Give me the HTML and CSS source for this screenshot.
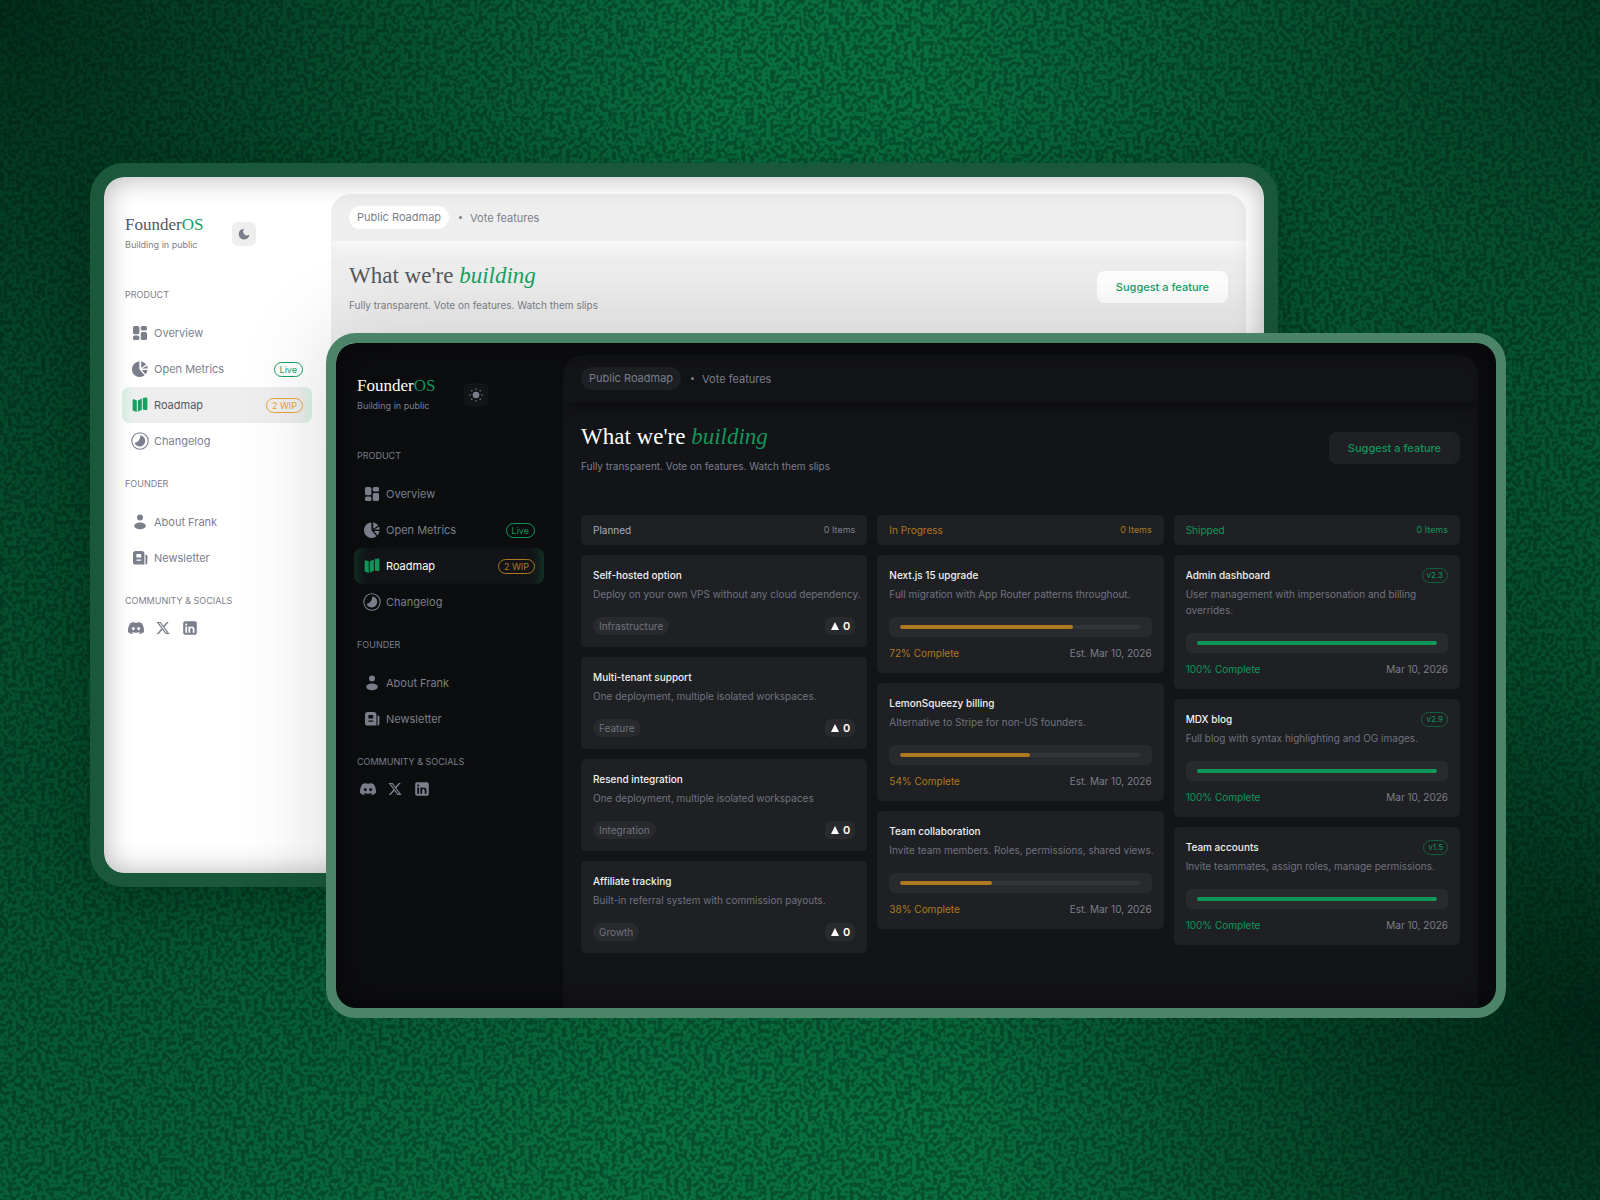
FILE: index.html
```
<!DOCTYPE html>
<html lang="en">
<head>
    <meta charset="UTF-8">
    <meta name="viewport" content="width=device-width, initial-scale=1.0">
    <title>FounderOS | Public Roadmap</title>
    <link rel="stylesheet" href="styles.css">
</head>
<body>
    <svg class="sprite" width="0" height="0" aria-hidden="true">
        <symbol id="i-overview" viewBox="0 0 16 16">
            <rect x="1" y="1" width="6.4" height="8.2" rx="1.6"/><rect x="8.8" y="1" width="6.2" height="4.6" rx="1.6"/>
            <rect x="1" y="10.4" width="6.4" height="4.6" rx="1.6"/><rect x="8.8" y="7" width="6.2" height="8" rx="1.6"/>
        </symbol>
        <symbol id="i-metrics" viewBox="0 0 16 16">
            <path d="M7.4.4A7.8 7.8 0 1 0 12.6 14.3L7.6 8.6Q7.4 8.3 7.4 8Z"/>
            <path d="M9.2.8Q9.2.4 9.7.5A7.4 7.4 0 0 1 13.8 3.1Q14.1 3.5 13.7 3.8L9.9 6.4Q9.2 6.8 9.2 6Z"/>
            <path d="M14.7 4.9Q15.1 4.7 15.3 5.2A7.6 7.6 0 0 1 15.6 7.4L10.8 7.4Q10.4 7.3 10.8 7Z"/>
            <path d="M10 8.9L15.5 8.9A7.8 7.8 0 0 1 13.8 13.1Q13.4 13.4 13.1 13Z"/>
        </symbol>
        <symbol id="i-roadmap" viewBox="0 0 16 16">
            <path d="M.6 3.4Q.6 1.9 2 2.3L4.8 3.4V14.9L1.7 13.9Q.6 13.5.6 12.4Z"/>
            <path d="M5.8 3.4L9.8 1.4V12.8L5.8 14.8Z"/>
            <path d="M10.8 1.1L13.9.6Q15.4.4 15.4 1.9V11.8Q15.4 12.8 14.5 13.2L10.8 12.6Z"/>
        </symbol>
        <symbol id="i-changelog" viewBox="0 0 18 18">
            <circle cx="9" cy="9" r="8.2" fill="none" stroke="currentColor" stroke-width="1.1"/>
            <path d="M9.2 4.1Q9.2 3.5 9.9 3.6A5.5 5.5 0 1 1 3.8 11.5Q3.5 10.9 4.2 10.7Q9.2 9.4 9.2 4.1Z"/>
        </symbol>
        <symbol id="i-about" viewBox="0 0 16 16">
            <circle cx="8" cy="3.5" r="3"/><ellipse cx="8" cy="11.9" rx="5.8" ry="3.3"/>
        </symbol>
        <symbol id="i-news" viewBox="0 0 16 16">
            <path fill-rule="evenodd" d="M3.6 1H9.6Q12.4 1 12.4 3.8V14.6H3.6Q1 14.6 1 12V3.8Q1 1 3.6 1ZM4.4 4V7.6H9.2V4ZM4.4 9.4V10.8H9.2V9.4Z"/>
            <path d="M13.5 4.4Q15.4 4.6 15.4 6.2V12.4Q15.4 14.6 13.5 14.6Z"/>
        </symbol>
        <symbol id="i-discord" viewBox="0 0 24 24">
            <path d="M20.317 4.37a19.79 19.79 0 0 0-4.885-1.515.074.074 0 0 0-.079.037c-.21.375-.444.864-.608 1.25a18.27 18.27 0 0 0-5.487 0 12.64 12.64 0 0 0-.617-1.25.077.077 0 0 0-.079-.037A19.736 19.736 0 0 0 3.677 4.37a.07.07 0 0 0-.032.027C.533 9.046-.32 13.58.099 18.057a.082.082 0 0 0 .031.057 19.9 19.9 0 0 0 5.993 3.03.078.078 0 0 0 .084-.028 14.09 14.09 0 0 0 1.226-1.994.076.076 0 0 0-.041-.106 13.107 13.107 0 0 1-1.872-.892.077.077 0 0 1-.008-.128 10.2 10.2 0 0 0 .372-.292.074.074 0 0 1 .077-.01c3.928 1.793 8.18 1.793 12.062 0a.074.074 0 0 1 .078.01c.12.098.246.198.373.292a.077.077 0 0 1-.006.127 12.299 12.299 0 0 1-1.873.892.077.077 0 0 0-.041.107c.36.698.772 1.362 1.225 1.993a.076.076 0 0 0 .084.028 19.839 19.839 0 0 0 6.002-3.03.077.077 0 0 0 .032-.054c.5-5.177-.838-9.674-3.549-13.66a.061.061 0 0 0-.031-.03zM8.02 15.33c-1.183 0-2.157-1.085-2.157-2.419 0-1.333.956-2.419 2.157-2.419 1.21 0 2.176 1.096 2.157 2.42 0 1.333-.956 2.418-2.157 2.418zm7.975 0c-1.183 0-2.157-1.085-2.157-2.419 0-1.333.955-2.419 2.157-2.419 1.21 0 2.176 1.096 2.157 2.42 0 1.333-.946 2.418-2.157 2.418z"/>
        </symbol>
        <symbol id="i-x" viewBox="0 0 24 24">
            <path fill-rule="evenodd" d="M17.7 3h3l-6.6 7.6L21.900 21h-6.100l-4.800-6.200L5.600 21h-3l7.100-8.100L2.200 3h6.200l4.300 5.700zM16.700 19.300h1.700L7.500 4.600H5.700z"/>
        </symbol>
        <symbol id="i-linkedin" viewBox="0 0 16 16">
            <path fill-rule="evenodd" d="M3 1.200H13Q14.800 1.200 14.800 3V13Q14.800 14.800 13 14.800H3Q1.200 14.800 1.200 13V3Q1.200 1.200 3 1.200ZM3.300 6.500V12.700H5.100V6.500ZM4.200 3.400A1.100 1.100 0 1 0 4.200 5.600A1.100 1.100 0 1 0 4.200 3.400ZM6.400 6.500V12.700H8.200V9.400Q8.200 8 9.400 8T10.700 9.400V12.700H12.500V8.900Q12.500 6.400 10.200 6.400Q8.800 6.400 8.200 7.300V6.500Z"/>
        </symbol>
        <symbol id="i-moon" viewBox="0 0 12 12">
            <path d="M5.800.7A5.400 5.400 0 1 0 11.400 7Q11.400 6.500 10.900 6.800A3.900 3.900 0 0 1 5.600 1.500Q6.100.8 5.800.7Z"/>
        </symbol>
        <symbol id="i-sun" viewBox="0 0 14 14">
            <circle cx="7" cy="7" r="3.300"/>
            <circle cx="7" cy="1" r=".8"/><circle cx="7" cy="13" r=".8"/><circle cx="1" cy="7" r=".8"/><circle cx="13" cy="7" r=".8"/>
            <circle cx="2.800" cy="2.800" r=".8"/><circle cx="11.200" cy="2.800" r=".8"/><circle cx="2.800" cy="11.200" r=".8"/><circle cx="11.200" cy="11.200" r=".8"/>
        </symbol>
    </svg>

    <main class="stage">
        <!-- grain over the green backdrop -->
        <svg class="grain" aria-hidden="true">
            <filter id="grain" x="0" y="0" width="100%" height="100%" color-interpolation-filters="sRGB">
                <feTurbulence type="fractalNoise" baseFrequency="0.24" numOctaves="1" seed="4"/>
                <feColorMatrix values="0 0 0 0 0  0 0 0 0 .08  0 0 0 0 .06  -9 0 0 0 4.900"/>
            </filter>
            <rect width="100%" height="100%" filter="url(#grain)"/>
        </svg>

        <section class="window light">
            <aside class="sidebar">
                <div class="brand">
                    <div>
                        <div class="logo">Founder<span>OS</span></div>
                        <p class="tagline">Building in public</p>
                    </div>
                    <button class="theme" aria-label="Dark theme"><svg width="12" height="12"><use href="#i-moon"/></svg></button>
                </div>
                <h2 class="label">PRODUCT</h2>
                <nav class="nav">
                    <a href="#"><svg><use href="#i-overview"/></svg>Overview</a>
                    <a href="#"><svg><use href="#i-metrics"/></svg>Open Metrics<span class="badge green">Live</span></a>
                    <a href="#" class="active"><svg><use href="#i-roadmap"/></svg>Roadmap<span class="badge orange">2 WIP</span></a>
                    <a href="#"><svg class="ring"><use href="#i-changelog"/></svg>Changelog</a>
                </nav>
                <h2 class="label">FOUNDER</h2>
                <nav class="nav">
                    <a href="#"><svg><use href="#i-about"/></svg>About Frank</a>
                    <a href="#"><svg><use href="#i-news"/></svg>Newsletter</a>
                </nav>
                <h2 class="label">COMMUNITY &amp; SOCIALS</h2>
                <div class="socials">
                    <a href="#" aria-label="Discord"><svg><use href="#i-discord"/></svg></a>
                    <a href="#" aria-label="X"><svg><use href="#i-x"/></svg></a>
                    <a href="#" aria-label="LinkedIn"><svg><use href="#i-linkedin"/></svg></a>
                </div>
            </aside>
            <div class="panel">
                <header class="topbar"><span class="crumb">Public Roadmap</span><span class="dot"></span><span>Vote features</span></header>
                <div class="content">
                    <div class="intro">
                        <div>
                            <h1>What we're <em>building</em></h1>
                            <p>Fully transparent. Vote on features. Watch them slips</p>
                        </div>
                        <button class="suggest">Suggest a feature</button>
                    </div>
                </div>
            </div>
        </section>

        <section class="window dark">
            <aside class="sidebar">
                <div class="brand">
                    <div>
                        <div class="logo">Founder<span>OS</span></div>
                        <p class="tagline">Building in public</p>
                    </div>
                    <button class="theme" aria-label="Light theme"><svg width="14" height="14"><use href="#i-sun"/></svg></button>
                </div>
                <h2 class="label">PRODUCT</h2>
                <nav class="nav">
                    <a href="#"><svg><use href="#i-overview"/></svg>Overview</a>
                    <a href="#"><svg><use href="#i-metrics"/></svg>Open Metrics<span class="badge green">Live</span></a>
                    <a href="#" class="active"><svg><use href="#i-roadmap"/></svg>Roadmap<span class="badge orange">2 WIP</span></a>
                    <a href="#"><svg class="ring"><use href="#i-changelog"/></svg>Changelog</a>
                </nav>
                <h2 class="label">FOUNDER</h2>
                <nav class="nav">
                    <a href="#"><svg><use href="#i-about"/></svg>About Frank</a>
                    <a href="#"><svg><use href="#i-news"/></svg>Newsletter</a>
                </nav>
                <h2 class="label">COMMUNITY &amp; SOCIALS</h2>
                <div class="socials">
                    <a href="#" aria-label="Discord"><svg><use href="#i-discord"/></svg></a>
                    <a href="#" aria-label="X"><svg><use href="#i-x"/></svg></a>
                    <a href="#" aria-label="LinkedIn"><svg><use href="#i-linkedin"/></svg></a>
                </div>
            </aside>
            <div class="panel">
                <header class="topbar"><span class="crumb">Public Roadmap</span><span class="dot"></span><span>Vote features</span></header>
                <div class="content">
                    <div class="intro">
                        <div>
                            <h1>What we're <em>building</em></h1>
                            <p>Fully transparent. Vote on features. Watch them slips</p>
                        </div>
                        <button class="suggest">Suggest a feature</button>
                    </div>

                    <div class="board">
                        <div class="column planned">
                            <div class="column-head"><h2>Planned</h2><span>0 Items</span></div>
                            <article class="card">
                                <h3>Self-hosted option</h3>
                                <p>Deploy on your own VPS without any cloud dependency.</p>
                                <div class="row"><span class="tag">Infrastructure</span><button class="vote"><i></i>0</button></div>
                            </article>
                            <article class="card">
                                <h3>Multi-tenant support</h3>
                                <p>One deployment, multiple isolated workspaces.</p>
                                <div class="row"><span class="tag">Feature</span><button class="vote"><i></i>0</button></div>
                            </article>
                            <article class="card">
                                <h3>Resend integration</h3>
                                <p>One deployment, multiple isolated workspaces</p>
                                <div class="row"><span class="tag">Integration</span><button class="vote"><i></i>0</button></div>
                            </article>
                            <article class="card">
                                <h3>Affiliate tracking</h3>
                                <p>Built-in referral system with commission payouts.</p>
                                <div class="row"><span class="tag">Growth</span><button class="vote"><i></i>0</button></div>
                            </article>
                        </div>

                        <div class="column progress">
                            <div class="column-head"><h2>In Progress</h2><span>0 Items</span></div>
                            <article class="card">
                                <h3>Next.js 15 upgrade</h3>
                                <p>Full migration with App Router patterns throughout.</p>
                                <div class="meter"><div class="track"><div class="fill" style="width: 72%"></div></div></div>
                                <div class="status"><b>72% Complete</b><span>Est. Mar 10, 2026</span></div>
                            </article>
                            <article class="card">
                                <h3>LemonSqueezy billing</h3>
                                <p>Alternative to Stripe for non-US founders.</p>
                                <div class="meter"><div class="track"><div class="fill" style="width: 54%"></div></div></div>
                                <div class="status"><b>54% Complete</b><span>Est. Mar 10, 2026</span></div>
                            </article>
                            <article class="card">
                                <h3>Team collaboration</h3>
                                <p>Invite team members. Roles, permissions, shared views.</p>
                                <div class="meter"><div class="track"><div class="fill" style="width: 38%"></div></div></div>
                                <div class="status"><b>38% Complete</b><span>Est. Mar 10, 2026</span></div>
                            </article>
                        </div>

                        <div class="column shipped">
                            <div class="column-head"><h2>Shipped</h2><span>0 Items</span></div>
                            <article class="card">
                                <h3>Admin dashboard<span class="version">v2.3</span></h3>
                                <p>User management with impersonation and billing overrides.</p>
                                <div class="meter"><div class="track"><div class="fill" style="width: 100%"></div></div></div>
                                <div class="status"><b>100% Complete</b><span>Mar 10, 2026</span></div>
                            </article>
                            <article class="card">
                                <h3>MDX blog<span class="version">v2.9</span></h3>
                                <p>Full blog with syntax highlighting and OG images.</p>
                                <div class="meter"><div class="track"><div class="fill" style="width: 100%"></div></div></div>
                                <div class="status"><b>100% Complete</b><span>Mar 10, 2026</span></div>
                            </article>
                            <article class="card">
                                <h3>Team accounts<span class="version">v1.5</span></h3>
                                <p>Invite teammates, assign roles, manage permissions.</p>
                                <div class="meter"><div class="track"><div class="fill" style="width: 100%"></div></div></div>
                                <div class="status"><b>100% Complete</b><span>Mar 10, 2026</span></div>
                            </article>
                        </div>
                    </div>
                </div>
            </div>
        </section>
    </main>
</body>
</html>
```
FILE: styles.css
```
* {
    box-sizing: border-box;
}
body {
    margin: 0;
    font-family: Inter, "Liberation Sans", sans-serif;
    font-size: 10px;
    line-height: 16px;
}
h1, h2, h3, p {
    margin: 0;
    font-weight: 400;
}
button {
    border: none;
    font-family: inherit;
    cursor: pointer;
}
a {
    color: inherit;
    text-decoration: none;
}
svg {
    fill: currentColor;
}
.sprite {
    position: absolute;
}
.stage {
    position: relative;
    min-height: 100vh;
    overflow: hidden;
    background:
        radial-gradient(circle at 0 0, rgba(2, 32, 21, 0.85), rgba(2, 32, 21, 0) 36%),
        radial-gradient(circle at 100% 85%, rgba(1, 26, 17, 0.85), rgba(1, 26, 17, 0) 34%),
        radial-gradient(circle at 100% 0, rgba(2, 40, 25, 0.75), rgba(2, 40, 25, 0) 34%),
        radial-gradient(circle at 0 65%, rgba(2, 48, 30, 0.55), rgba(2, 48, 30, 0) 40%),
        #096e40;
}
.grain {
    position: absolute;
    inset: 0;
    width: 100%;
    height: 100%;
    opacity: 0.32;
}

/* windows */
.window {
    position: absolute;
    display: flex;
    overflow: hidden;
    color: var(--muted);
    background: var(--bg);
    background-clip: padding-box;
}
.window::after {
    content: "";
    position: absolute;
    inset: 0;
    border-radius: 20px;
    box-shadow: var(--inner);
    pointer-events: none;
}
.light {
    --bg: #ffffff;
    --panel: #eeeeee;
    --pill: #ffffff;
    --muted: #7b7f8c;
    --strong: #55585f;
    --green: #16a163;
    --orange: #e8a33d;
    --bar-glow: 0 4px 18px 2px rgba(255, 255, 255, 0.8);
    --inner: inset 0 0 28px rgba(0, 0, 0, 0.3);
    --active: #eeeeee;
    --active-glow: inset 14px 0 12px -12px #c8f8e0, inset -14px 0 12px -12px #c8f8e0;
    top: 163px;
    left: 5.625%;
    width: 74.25%;
    min-height: 724px;
    padding: 17px 18px 0;
    border: 14px solid #1a583b;
    border-radius: 34px;
    box-shadow: 0 16px 60px rgba(0, 20, 10, 0.4);
}
.dark {
    --bg: #0c0d0f;
    --panel: #131418;
    --pill: #1f2023;
    --muted: #7b7f8c;
    --strong: #ffffff;
    --green: #11965a;
    --orange: #b0781f;
    --bar-glow: 0 4px 14px rgba(0, 0, 0, 0.35);
    --inner: inset 0 0 34px rgba(0, 0, 0, 0.5);
    --active: #131418;
    --active-glow: inset 14px 0 12px -12px #11432c, inset -14px 0 12px -12px #11432c;
    top: 333px;
    left: 20.375%;
    width: 73.75%;
    padding: 12px 18px 0;
    border: 10px solid #4b8469;
    border-radius: 30px;
    box-shadow: 0 0 90px rgba(0, 20, 12, 0.16);
}

/* sidebar */
.sidebar {
    flex: none;
    width: 209px;
    padding: 19px 19px 0 0;
}
.brand {
    display: flex;
    gap: 29px;
    height: 57px;
    padding-left: 3px;
}
.logo {
    font-family: "Liberation Serif", serif;
    font-size: 17px;
    line-height: 24px;
    color: var(--strong);
}
.logo span {
    color: var(--green);
}
.tagline {
    font-size: 9px;
}
.theme {
    display: grid;
    place-items: center;
    width: 24px;
    height: 24px;
    margin-top: 9px;
    padding: 0;
    border-radius: 6px;
    color: var(--muted);
    background: var(--active);
}
.label {
    padding: 18px 3px 12px;
    font-size: 9px;
    line-height: 14px;
}
.nav {
    padding-top: 1px;
}
.nav a {
    display: flex;
    align-items: center;
    height: 36px;
    padding: 0 9px 0 10px;
    border-radius: 8px;
    font-size: 11px;
}
.nav svg {
    width: 16px;
    height: 16px;
    margin-right: 6px;
}
.nav svg.ring {
    width: 18px;
    height: 18px;
    margin: 0 5px 0 -1px;
}
.nav .active {
    color: var(--strong);
    background: var(--active);
    box-shadow: var(--active-glow);
}
.nav .active svg {
    color: var(--green);
}
.badge {
    margin-left: auto;
    padding: 0 5px;
    border: 1px solid;
    border-radius: 8px;
    font-size: 9px;
    line-height: 13px;
}
.green {
    color: var(--green);
}
.orange {
    color: var(--orange);
}
.socials {
    display: flex;
    gap: 11px;
    padding-left: 6px;
}
.socials svg {
    display: block;
    width: 16px;
    height: 16px;
}

/* panel */
.panel {
    flex: 1;
    border-radius: 20px 20px 0 0;
    background: var(--panel);
}
.topbar {
    display: flex;
    align-items: center;
    height: 47px;
    padding: 0 18px;
    border-radius: 20px 20px 0 0;
    font-size: 11px;
    background: var(--panel);
    box-shadow: var(--bar-glow);
    clip-path: inset(0 0 -40px 0);
}
.crumb {
    padding: 4px 8px;
    border-radius: 12px;
    line-height: 15px;
    background: var(--pill);
}
.dot {
    width: 3px;
    height: 3px;
    margin: 0 8px 0 10px;
    border-radius: 50%;
    background: var(--muted);
}
.content {
    padding: 20px 18px 55px;
}
.intro {
    display: flex;
    align-items: center;
    justify-content: space-between;
}
h1 {
    margin-bottom: 6px;
    font-family: "Liberation Serif", serif;
    font-size: 23px;
    line-height: 30px;
    color: var(--strong);
}
h1 em {
    color: var(--green);
}
.suggest {
    height: 32px;
    padding: 0 19px;
    border-radius: 8px;
    font-size: 11px;
    font-weight: 500;
    color: var(--green);
    background: var(--pill);
}

/* board */
.board {
    display: grid;
    grid-template-columns: repeat(3, 1fr);
    gap: 10px;
    margin-top: 41px;
}
.column {
    --accent: #a9acbd;
    display: flex;
    flex-direction: column;
    gap: 10px;
}
.progress {
    --accent: var(--orange);
}
.shipped {
    --accent: var(--green);
}
.column-head {
    display: flex;
    align-items: center;
    justify-content: space-between;
    height: 30px;
    padding: 0 12px;
    border-radius: 5px;
    color: var(--accent);
    background: var(--pill);
}
.column-head h2 {
    font-size: 10px;
}
.column-head span {
    font-size: 9px;
}
.planned .column-head span {
    color: var(--muted);
}
.card {
    padding: 12px;
    border-radius: 5px;
    color: #6f7380;
    background: var(--pill);
}
.card h3 {
    display: flex;
    align-items: center;
    justify-content: space-between;
    height: 16px;
    margin-bottom: 3px;
    font-size: 10px;
    font-weight: 500;
    color: #f1f1f3;
}
.card p {
    margin: 0 -8px 15px 0;
}
.row, .status {
    display: flex;
    align-items: center;
    justify-content: space-between;
}
.tag {
    padding: 1px 6px;
    border-radius: 9px;
    background: #292a2d;
}
.vote {
    display: flex;
    align-items: center;
    gap: 4px;
    height: 18px;
    padding: 0 5px 0 6px;
    border-radius: 6px;
    font-size: 11px;
    font-weight: 600;
    color: #ffffff;
    background: #292a2d;
}
.vote i {
    border: 4px solid transparent;
    border-top: none;
    border-bottom: 8px solid #ffffff;
}
.meter {
    padding: 8px 11px;
    margin-bottom: 8px;
    border-radius: 6px;
    background: #292a2d;
}
.track {
    height: 4px;
    border-radius: 2px;
    background: #333438;
}
.fill {
    height: 4px;
    border-radius: 2px;
    background: var(--accent);
}
.status {
    color: var(--muted);
}
.status b {
    font-weight: 400;
    color: var(--accent);
}
.version {
    padding: 0 4px;
    border: 1px solid #12603d;
    border-radius: 8px;
    font-size: 8px;
    font-weight: 400;
    line-height: 13px;
    color: var(--green);
}
```
